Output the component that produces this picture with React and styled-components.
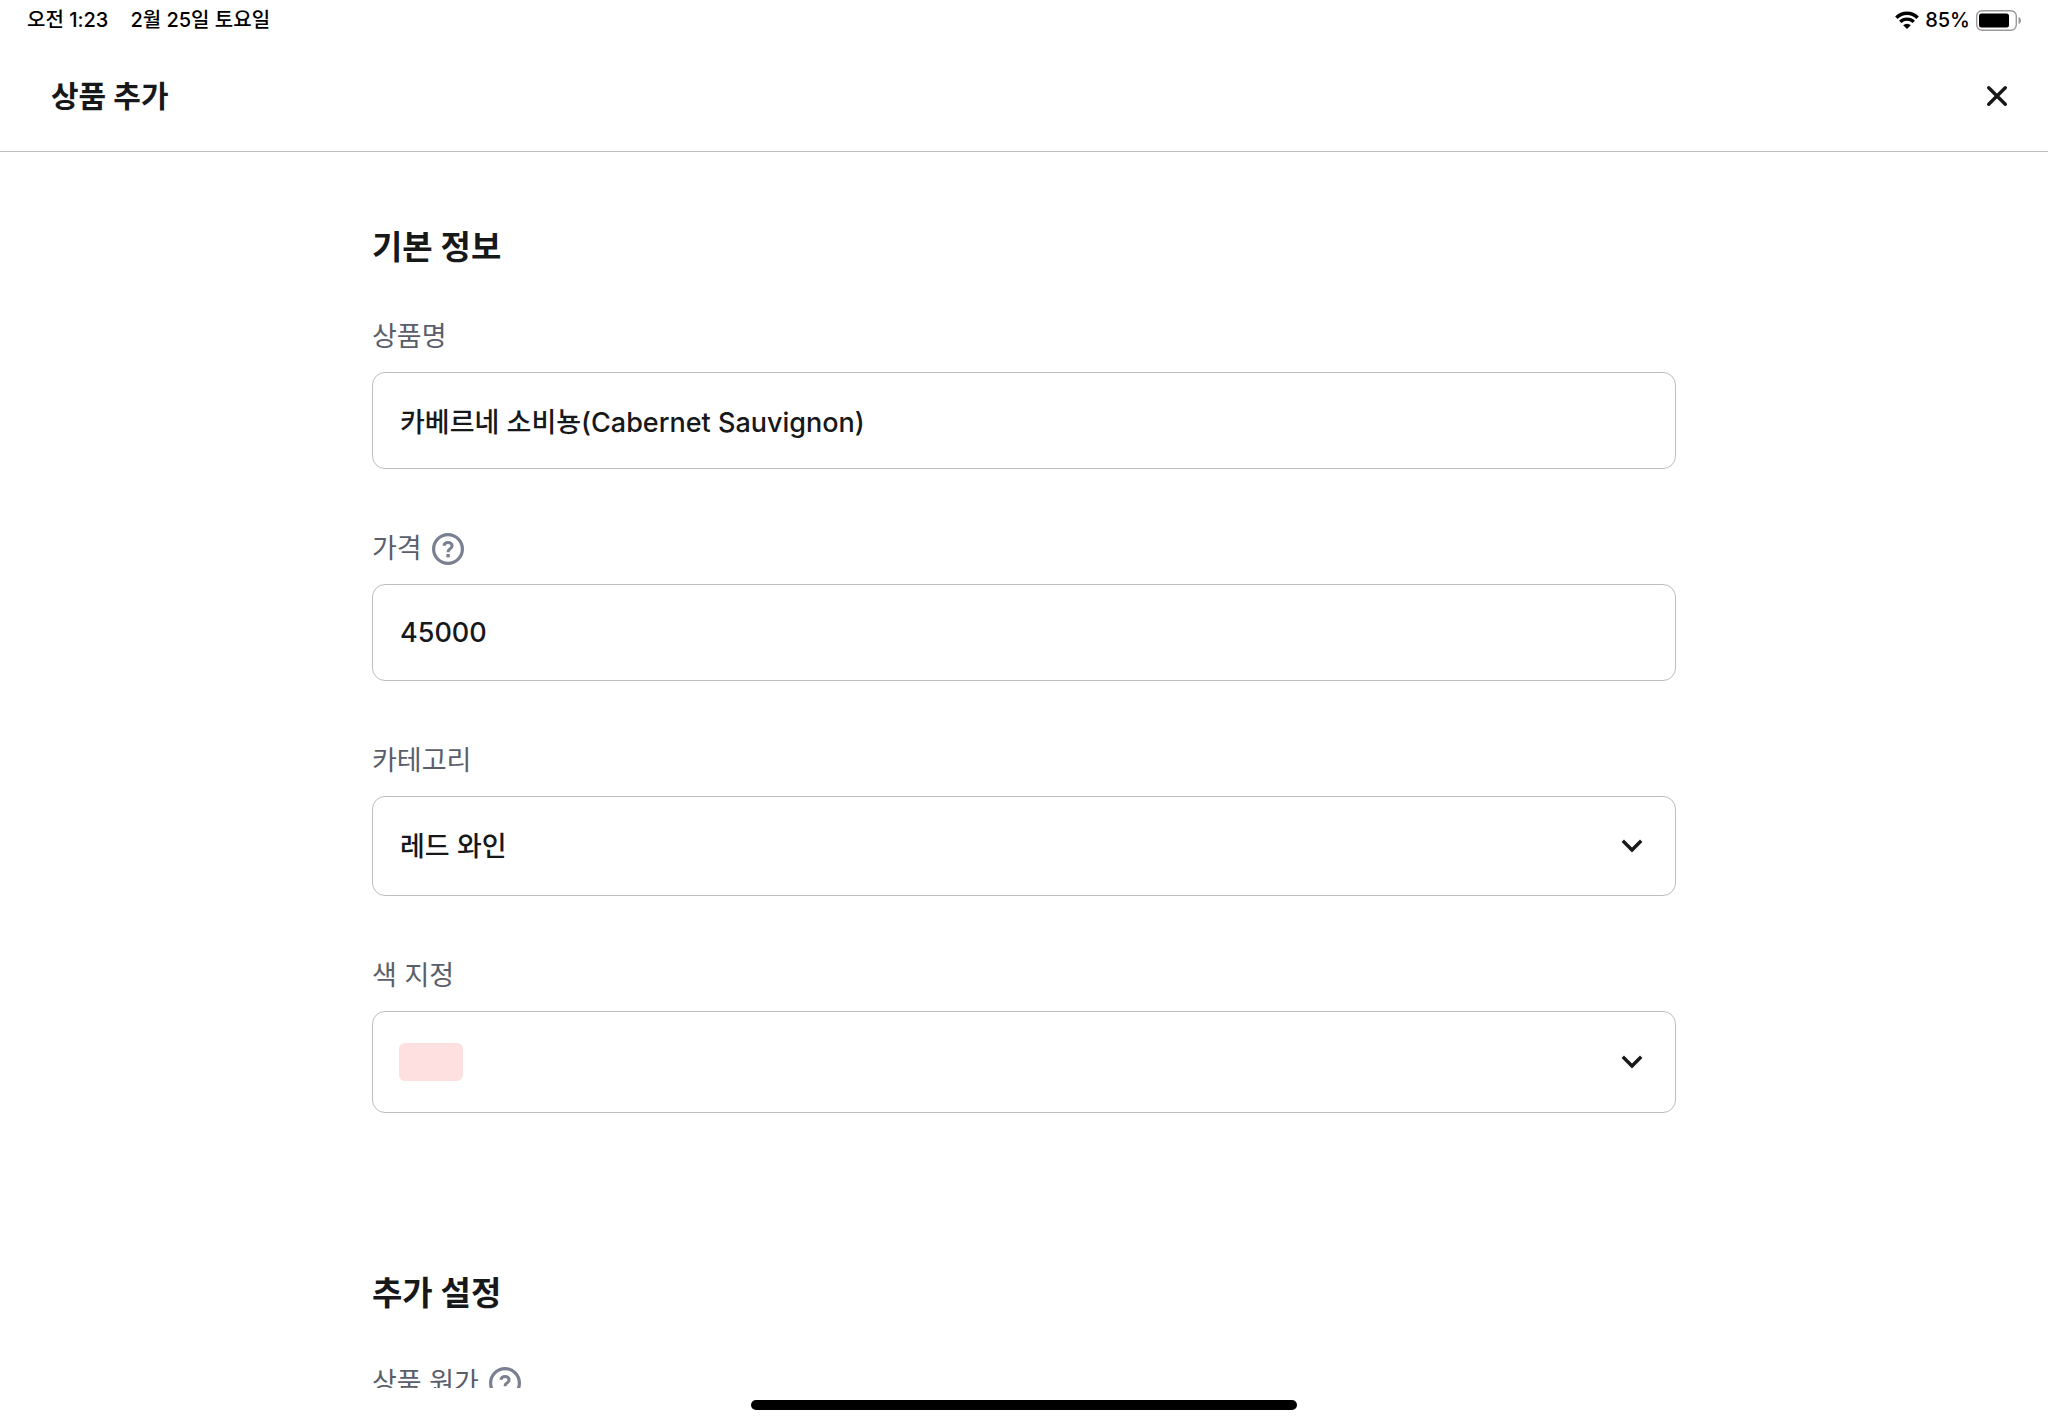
import React, { useState } from "react";
import styled, { createGlobalStyle } from "styled-components";

const GlobalStyle = createGlobalStyle`
  * {
    box-sizing: border-box;
  }
  body {
    margin: 0;
    background: #fff;
    color: #17181a;
    font-family: Inter, "Noto Sans CJK KR", sans-serif;
  }
  button, input, select {
    font-family: inherit;
    color: inherit;
  }
`;

const Screen = styled.div`
  display: flex;
  flex-direction: column;
  height: 100vh;
`;

const StatusBar = styled.div`
  display: flex;
  align-items: center;
  justify-content: space-between;
  flex-shrink: 0;
  height: 40px;
  padding: 0 26px 0 27px;
  color: #000;
  font-size: 20px;
  line-height: 26px;
  font-weight: 500;
`;

const StatusGroup = styled.div`
  display: flex;
  align-items: center;
  gap: ${(props) => props.gap}px;
`;

const Header = styled.header`
  display: flex;
  align-items: center;
  justify-content: space-between;
  flex-shrink: 0;
  height: 112px;
  padding: 0 34px 0 51px;
  border-bottom: 1px solid #bcbdbf;
`;

const Title = styled.h1`
  margin: 0;
  font-size: 30px;
  line-height: 40px;
  font-weight: 700;
`;

const CloseButton = styled.button`
  display: flex;
  padding: 0;
  border: 0;
  background: none;
  cursor: pointer;
`;

const Content = styled.main`
  flex: 1;
  min-height: 0;
  overflow-y: auto;
  scrollbar-width: none;
  padding: 71px 40px 0;
`;

const Form = styled.form`
  display: flex;
  flex-direction: column;
  gap: 156px;
  width: 100%;
  max-width: 1304px;
  margin: 0 auto;
`;

const Section = styled.section`
  display: flex;
  flex-direction: column;
  gap: 60px;
`;

const SectionTitle = styled.h2`
  margin: 0 0 -14px;
  font-size: 33px;
  line-height: 48px;
  font-weight: 700;
`;

const Field = styled.div`
  display: flex;
  flex-direction: column;
  gap: 15px;
`;

const LabelRow = styled.div`
  display: flex;
  align-items: center;
  gap: 10px;
  height: 40px;
`;

const Label = styled.label`
  color: #5a5e6b;
  font-size: 27px;
  line-height: 40px;
  font-weight: 400;
`;

const HelpButton = styled.button`
  display: flex;
  padding: 0;
  border: 0;
  background: none;
  color: #7b8090;
  cursor: pointer;
`;

const TextInput = styled.input`
  width: 100%;
  height: 97px;
  padding: 0 27px;
  border: 1px solid #bcbdbf;
  border-radius: 13px;
  background: #fff;
  font-size: 27px;
  line-height: 40px;
  font-weight: 500;
  outline: none;
`;

const SelectBox = styled.div`
  display: grid;
  align-items: center;
  height: ${(props) => props.height}px;
  > * {
    grid-area: 1 / 1;
  }
  > svg {
    justify-self: end;
    margin-right: 25px;
    pointer-events: none;
  }
`;

const Select = styled.select`
  appearance: none;
  width: 100%;
  height: 100%;
  padding: 0 80px 0 27px;
  border: 1px solid #bcbdbf;
  border-radius: 13px;
  background: #fff;
  font-size: 27px;
  font-weight: 500;
  outline: none;
`;

const Swatch = styled.span`
  width: 64px;
  height: 38px;
  margin-left: 27px;
  border-radius: 6px;
  background: ${(props) => props.color};
  pointer-events: none;
`;

const HomeArea = styled.footer`
  display: flex;
  justify-content: center;
  flex-shrink: 0;
  padding: 12px 0 13px;
`;

const HomeIndicator = styled.div`
  width: 546px;
  height: 10px;
  border-radius: 5px;
  background: #000;
`;

const WifiIcon = () => (
  <svg width="24" height="18" viewBox="0 0 24 18" fill="none">
    <path d="M1.4 6.7a15 15 0 0 1 21.2 0" stroke="#000" strokeWidth="3.6" />
    <path d="M5.3 10.9a9.4 9.4 0 0 1 13.4 0" stroke="#000" strokeWidth="3.4" />
    <path d="M12 18 8.2 14.2a5.4 5.4 0 0 1 7.6 0z" fill="#000" />
  </svg>
);

const BatteryIcon = () => (
  <svg width="46" height="21" viewBox="0 0 46 21" fill="none">
    <rect x="0.7" y="0.7" width="39.6" height="19.6" rx="5.5" stroke="#999" strokeWidth="1.4" />
    <rect x="3" y="3.5" width="30" height="14" rx="2.5" fill="#000" />
    <path d="M42.5 7c3.4 1 3.4 6 0 7z" fill="#999" />
  </svg>
);

const CloseIcon = () => (
  <svg width="34" height="34" viewBox="0 0 34 34" fill="none">
    <path d="m8.7 8.7 16.6 16.6m0-16.6L8.7 25.3" stroke="currentColor" strokeWidth="3.4" strokeLinecap="round" />
  </svg>
);

const ChevronIcon = () => (
  <svg width="38" height="38" viewBox="0 0 38 38" fill="none">
    <path d="m11 15 8 8 8-8" stroke="currentColor" strokeWidth="3.4" strokeLinecap="square" />
  </svg>
);

const HelpIcon = () => (
  <svg width="32" height="32" viewBox="0 0 32 32" fill="none">
    <circle cx="16" cy="16" r="14.4" stroke="currentColor" strokeWidth="3.2" />
    <path
      d="M11.9 12.7c.3-2 1.9-3.3 4.1-3.3 2.4 0 4.1 1.4 4.1 3.4 0 1.5-.8 2.4-2.2 3.3-1.3.8-1.8 1.4-1.8 2.7v.4"
      stroke="currentColor"
      strokeWidth="3"
    />
    <path d="M14.4 21h3.4v3.4h-3.4z" fill="currentColor" />
  </svg>
);

const FieldLabel = ({ id, text, help }) => {
  return (
    <LabelRow>
      <Label htmlFor={id}>{text}</Label>
      {help && (
        <HelpButton type="button" aria-label={`${text} 도움말`}>
          <HelpIcon />
        </HelpButton>
      )}
    </LabelRow>
  );
};

const App = () => {
  const [name, setName] = useState("카베르네 소비뇽(Cabernet Sauvignon)");
  const [price, setPrice] = useState("45000");
  return (
    <Screen>
      <GlobalStyle />
      <StatusBar>
        <StatusGroup gap={22}>
          <span>오전 1:23</span>
          <span>2월 25일 토요일</span>
        </StatusGroup>
        <StatusGroup gap={6}>
          <WifiIcon />
          <span>85%</span>
          <BatteryIcon />
        </StatusGroup>
      </StatusBar>
      <Header>
        <Title>상품 추가</Title>
        <CloseButton type="button" aria-label="닫기">
          <CloseIcon />
        </CloseButton>
      </Header>
      <Content>
        <Form>
          <Section>
            <SectionTitle>기본 정보</SectionTitle>
            <Field>
              <FieldLabel id="name" text="상품명" />
              <TextInput
                id="name"
                value={name}
                onChange={(e) => setName(e.target.value)}
              />
            </Field>
            <Field>
              <FieldLabel id="price" text="가격" help />
              <TextInput
                id="price"
                inputMode="numeric"
                value={price}
                onChange={(e) => setPrice(e.target.value)}
              />
            </Field>
            <Field>
              <FieldLabel id="category" text="카테고리" />
              <SelectBox height={100}>
                <Select id="category" defaultValue="red">
                  <option value="red">레드 와인</option>
                </Select>
                <ChevronIcon />
              </SelectBox>
            </Field>
            <Field>
              <FieldLabel id="color" text="색 지정" />
              <SelectBox height={102}>
                <Select id="color" defaultValue="#ffe0e0">
                  <option value="#ffe0e0" aria-label="연분홍"></option>
                </Select>
                <Swatch color="#ffe0e0" />
                <ChevronIcon />
              </SelectBox>
            </Field>
          </Section>
          <Section>
            <SectionTitle>추가 설정</SectionTitle>
            <Field>
              <FieldLabel id="cost" text="상품 원가" help />
              <TextInput id="cost" inputMode="numeric" />
            </Field>
          </Section>
        </Form>
      </Content>
      <HomeArea>
        <HomeIndicator />
      </HomeArea>
    </Screen>
  );
};

export default App;
